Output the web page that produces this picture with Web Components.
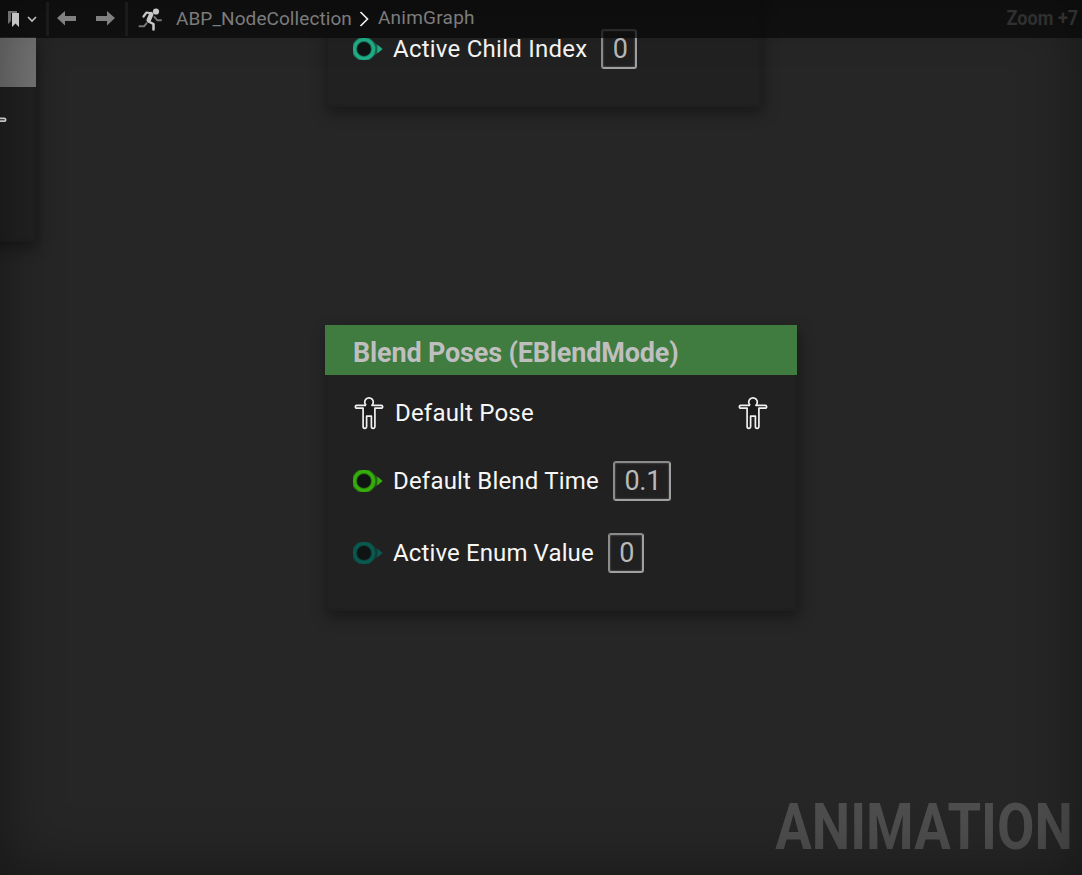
<!DOCTYPE html>
<html lang="en">
<head>
<meta charset="utf-8">
<title>AnimGraph</title>
<style>
html, body { margin: 0; height: 100%; overflow: hidden; background: #262626; font-family: Roboto, "Liberation Sans", sans-serif; }
</style>
</head>
<body>
<graph-editor></graph-editor>
<script>
const define = (name, html) => {
  const t = document.createElement('template');
  t.innerHTML = html;
  customElements.define(name, class extends HTMLElement {
    constructor() {
      super();
      this.attachShadow({ mode: 'open' }).appendChild(t.content.cloneNode(true));
    }
  });
};

define('pose-pin', `
<style>:host{display:block;width:30px;height:34px}svg{display:block}</style>
<svg width="30" height="34" viewBox="0 0 30 34" fill="#1b1b1b" stroke="#f0f0f0" stroke-width="1.7" stroke-linejoin="round">
<path d="M12.1 9.300A4.300 4.300 0 1 1 17.900 9.300H27.200a1.350 1.350 0 0 1 0 2.900H20.900V30.600a1.750 1.750 0 0 1-3.500 0V20.200H12.600V30.600a1.750 1.750 0 0 1-3.500 0V12.200H2.800a1.350 1.350 0 0 1 0-2.900H12.100"/>
</svg>`);

define('value-pin', `
<style>:host{display:block;width:30px;height:22px;color:var(--pin)}svg{display:block}</style>
<svg width="30" height="22" viewBox="0 0 30 22">
<path d="M20 3.500L29.600 11 20 18.500Z" fill="currentColor" opacity=".45"/>
<path d="M24.300 6.600L29.600 11 24.300 15.400Z" fill="currentColor"/>
<circle cx="11" cy="11" r="9.500" fill="#101313" stroke="currentColor" stroke-width="5"/>
<circle cx="11" cy="11" r="7.300" fill="none" stroke="#101313" stroke-opacity=".4" stroke-width="1.200"/>
<circle cx="11" cy="11" r="11.700" fill="none" stroke="#202020" stroke-opacity=".4" stroke-width="1.200"/>
</svg>`);

define('value-box', `
<style>
:host{display:block;box-sizing:border-box;height:40px;padding:0 7.5px 0 9.5px;border:2px solid #a0a0a0;border-top-color:#8a8a8a;border-left-color:#8c8c8c;border-radius:3px;
font-size:27px;line-height:36px;color:#b9b9b9;letter-spacing:-.2px;background:#202020;box-shadow:inset 0 0 2px #777}
</style><slot></slot>`);

define('pin-row', `
<style>
:host{display:flex;align-items:center;height:40px;font-size:24px;line-height:28px;color:#f7f7f7;letter-spacing:.19px;white-space:nowrap}
.label{margin:0 14px 0 var(--lead,10px)}
slot[name=out]{display:block;margin-left:auto}
</style>
<slot name="pin"></slot><span class="label"><slot></slot></span><slot name="value"></slot><slot name="out"></slot>`);

define('graph-node', `
<style>
:host{display:block;box-sizing:border-box;background:#212121;box-shadow:2px 6px 14px 0 rgba(0,0,0,.38), inset 0 0 0 3px rgba(0,0,0,.04)}
header{box-sizing:border-box;height:50px;padding:0 28px;background:var(--title-bg,#407b40);color:#bfbfbf;font-weight:700;font-size:27px;line-height:56px;white-space:nowrap;letter-spacing:-.17px}
</style>
<header><slot name="title"></slot></header><slot></slot>`);

define('tool-bar', `
<style>
:host{display:flex;box-sizing:border-box;height:38px;background:rgba(8,8,8,.72);color:#7c7c7c;font-size:19px;letter-spacing:.07px;line-height:37px;white-space:nowrap}
svg{display:block;flex:none}
.zoom{margin-left:auto;margin-right:4px;color:#303030;font-weight:700;letter-spacing:0;font-size:20px;transform:scaleX(.905);transform-origin:100% 50%}
.name{margin-left:4px}.leaf{margin-left:6px;margin-top:-1px;letter-spacing:.25px}
</style>
<svg width="172" height="38" viewBox="0 0 172 38">
<path d="M46 2h3v34h-3zM125 2h3v34h-3z" fill="#1b1b1b"/>
<path d="M8 11h9v2h-6v8l-3 3z" fill="#6f6f6f"/>
<path d="M12 13h7v14l-3.500-3.500L12 27z" fill="#c4c4c4"/>
<path d="M28 17l4 4 4-4" fill="none" stroke="#bcbcbc" stroke-width="1.700"/>
<path d="M57 18l8-7v5h11v5H65v4.500z M115 18l-8-7v5H96v5h11v4.500z" fill="#808080"/>
<circle cx="156" cy="11.500" r="3.100" fill="#c8c8c8"/>
<g fill="none" stroke-linecap="round" stroke-linejoin="round">
<path d="M139.500 26.300h4.500l2.500-3M154.500 17l2.500 3.200h4" stroke="#777" stroke-width="2"/>
<path d="M143.500 16.500l3-4 5 .8" stroke="#c8c8c8" stroke-width="2.200"/>
<path d="M151.300 14.200l-2.600 6" stroke="#c8c8c8" stroke-width="4.500"/>
<path d="M148.500 21.500l5 2.500v5.500" stroke="#c8c8c8" stroke-width="2.500"/>
</g>
</svg>
<span class="name">ABP_NodeCollection</span>
<svg width="20" height="38" viewBox="0 0 20 38"><path d="M8.500 12l7 7-7 7" fill="none" stroke="#eee" stroke-width="1.700"/></svg>
<span class="leaf">AnimGraph</span>
<span class="zoom">Zoom +7</span>`);

define('graph-editor', `
<style>
:host{display:block;position:relative;width:1082px;height:875px;overflow:hidden;background:#262626}
graph-node{position:absolute}
.left{left:-300px;top:37px;width:336px;height:205px;--title-bg:#737373}
.left pose-pin{margin:22px 0 0 277px}
.child{left:325px;top:-145px;width:436px;height:252px}
.child pin-row{margin:124px 28px 0;letter-spacing:.24px}
.blend{left:325px;top:325px;width:472px;height:286px}
.rows{padding:18px 28px 0}
.pose{--lead:11px;padding:0 1px}
.time{margin-top:28px}
.enum{margin-top:32px;letter-spacing:.12px}
.mark{position:absolute;right:9px;bottom:10px;font-size:65px;line-height:76px;font-weight:700;color:#4d4d4d;transform:scaleX(.836);transform-origin:100% 50%}
.vignette{position:absolute;inset:0;box-shadow:inset 0 0 60px rgba(0,0,0,.42);pointer-events:none}
tool-bar{position:absolute;left:0;right:0;top:0}
</style>
<graph-node class="left"><pose-pin></pose-pin></graph-node>
<graph-node class="child"><pin-row><value-pin slot="pin" style="--pin:#1faf87"></value-pin>Active Child Index<value-box slot="value">0</value-box></pin-row></graph-node>
<graph-node class="blend"><span slot="title">Blend Poses (EBlendMode)</span>
<div class="rows">
<pin-row class="pose"><pose-pin slot="pin"></pose-pin>Default Pose<pose-pin slot="out"></pose-pin></pin-row>
<pin-row class="time"><value-pin slot="pin" style="--pin:#35ad0b"></value-pin>Default Blend Time<value-box slot="value">0.1</value-box></pin-row>
<pin-row class="enum"><value-pin slot="pin" style="--pin:#09594f"></value-pin>Active Enum Value<value-box slot="value">0</value-box></pin-row>
</div></graph-node>
<div class="mark">ANIMATION</div>
<div class="vignette"></div>
<tool-bar></tool-bar>`);
</script>
</body>
</html>
